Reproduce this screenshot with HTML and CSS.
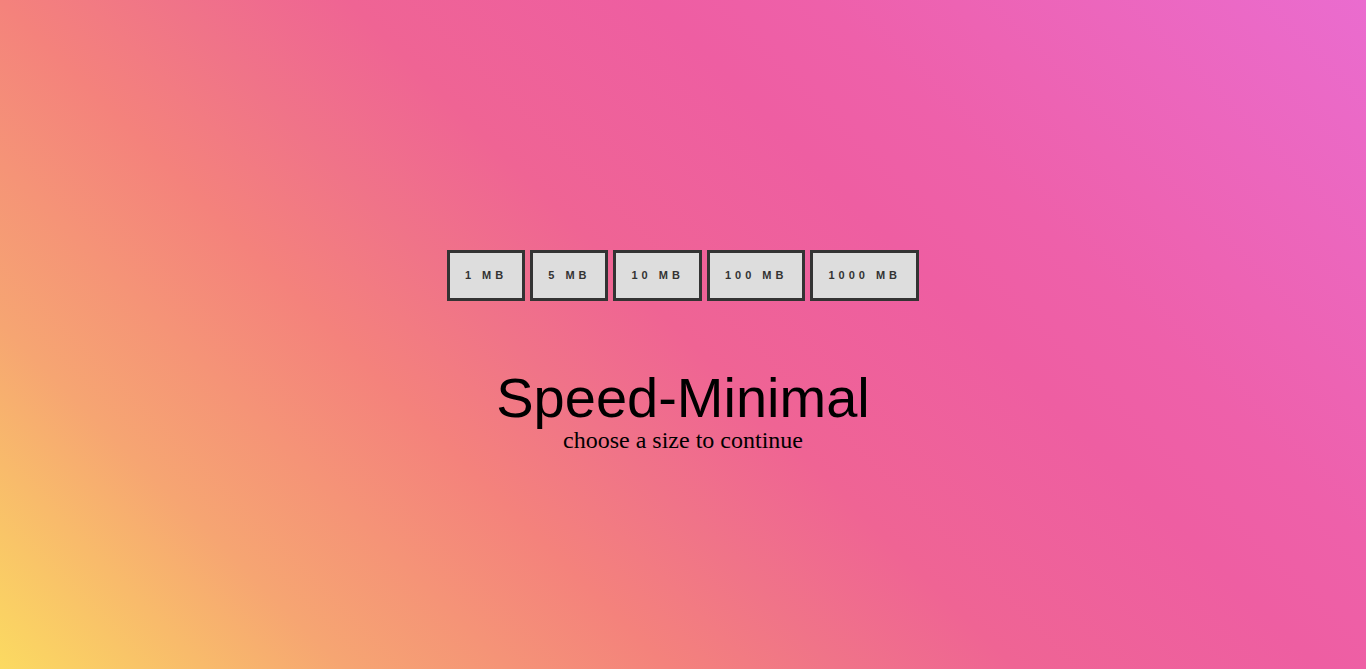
FILE: index.html
```html
<!DOCTYPE html>
<html lang="en">
<head>
<meta charset="utf-8">
<title>Speed-Minimal</title>
<link rel="stylesheet" href="styles.css">
</head>
<body>
<main class="page">
  <div class="sizes">
    <button class="size">1 MB</button>
    <button class="size">5 MB</button>
    <button class="size">10 MB</button>
    <button class="size">100 MB</button>
    <button class="size">1000 MB</button>
  </div>
  <h1 class="title">Speed-Minimal</h1>
  <p class="subtitle">choose a size to continue</p>
</main>
</body>
</html>
```
FILE: styles.css
```css
html, body {
  margin: 0;
  padding: 0;
}
body {
  min-height: 100vh;
  background: linear-gradient(45deg,
    #fbda61 0%,
    #f6a572 17%,
    #f4827c 33%,
    #f07488 41%,
    #ef6494 50%,
    #ee5ea2 65%,
    #ee60aa 73%,
    #ea6ccf 100%);
  font-family: "Liberation Serif", "Times New Roman", serif;
  color: #000;
}
.page {
  padding-top: 250px;
  text-align: center;
}
.sizes {
  display: flex;
  justify-content: center;
  gap: 5px;
}
.size {
  margin: 0;
  padding: 15px 15px;
  border: 3px solid #333;
  border-radius: 0;
  background: #ddd;
  color: #333;
  font-family: "Liberation Sans", Arial, sans-serif;
  font-weight: bold;
  font-size: 11px;
  line-height: 15px;
  letter-spacing: 4px;
  text-transform: uppercase;
  cursor: pointer;
}
.title {
  margin: 67px 0 0;
  font-family: "Liberation Sans", Arial, sans-serif;
  font-weight: normal;
  font-size: 56px;
  line-height: 60px;
}
.subtitle {
  margin: 0;
  font-family: "Liberation Serif", "Times New Roman", serif;
  font-size: 24px;
  line-height: 24px;
}
```
